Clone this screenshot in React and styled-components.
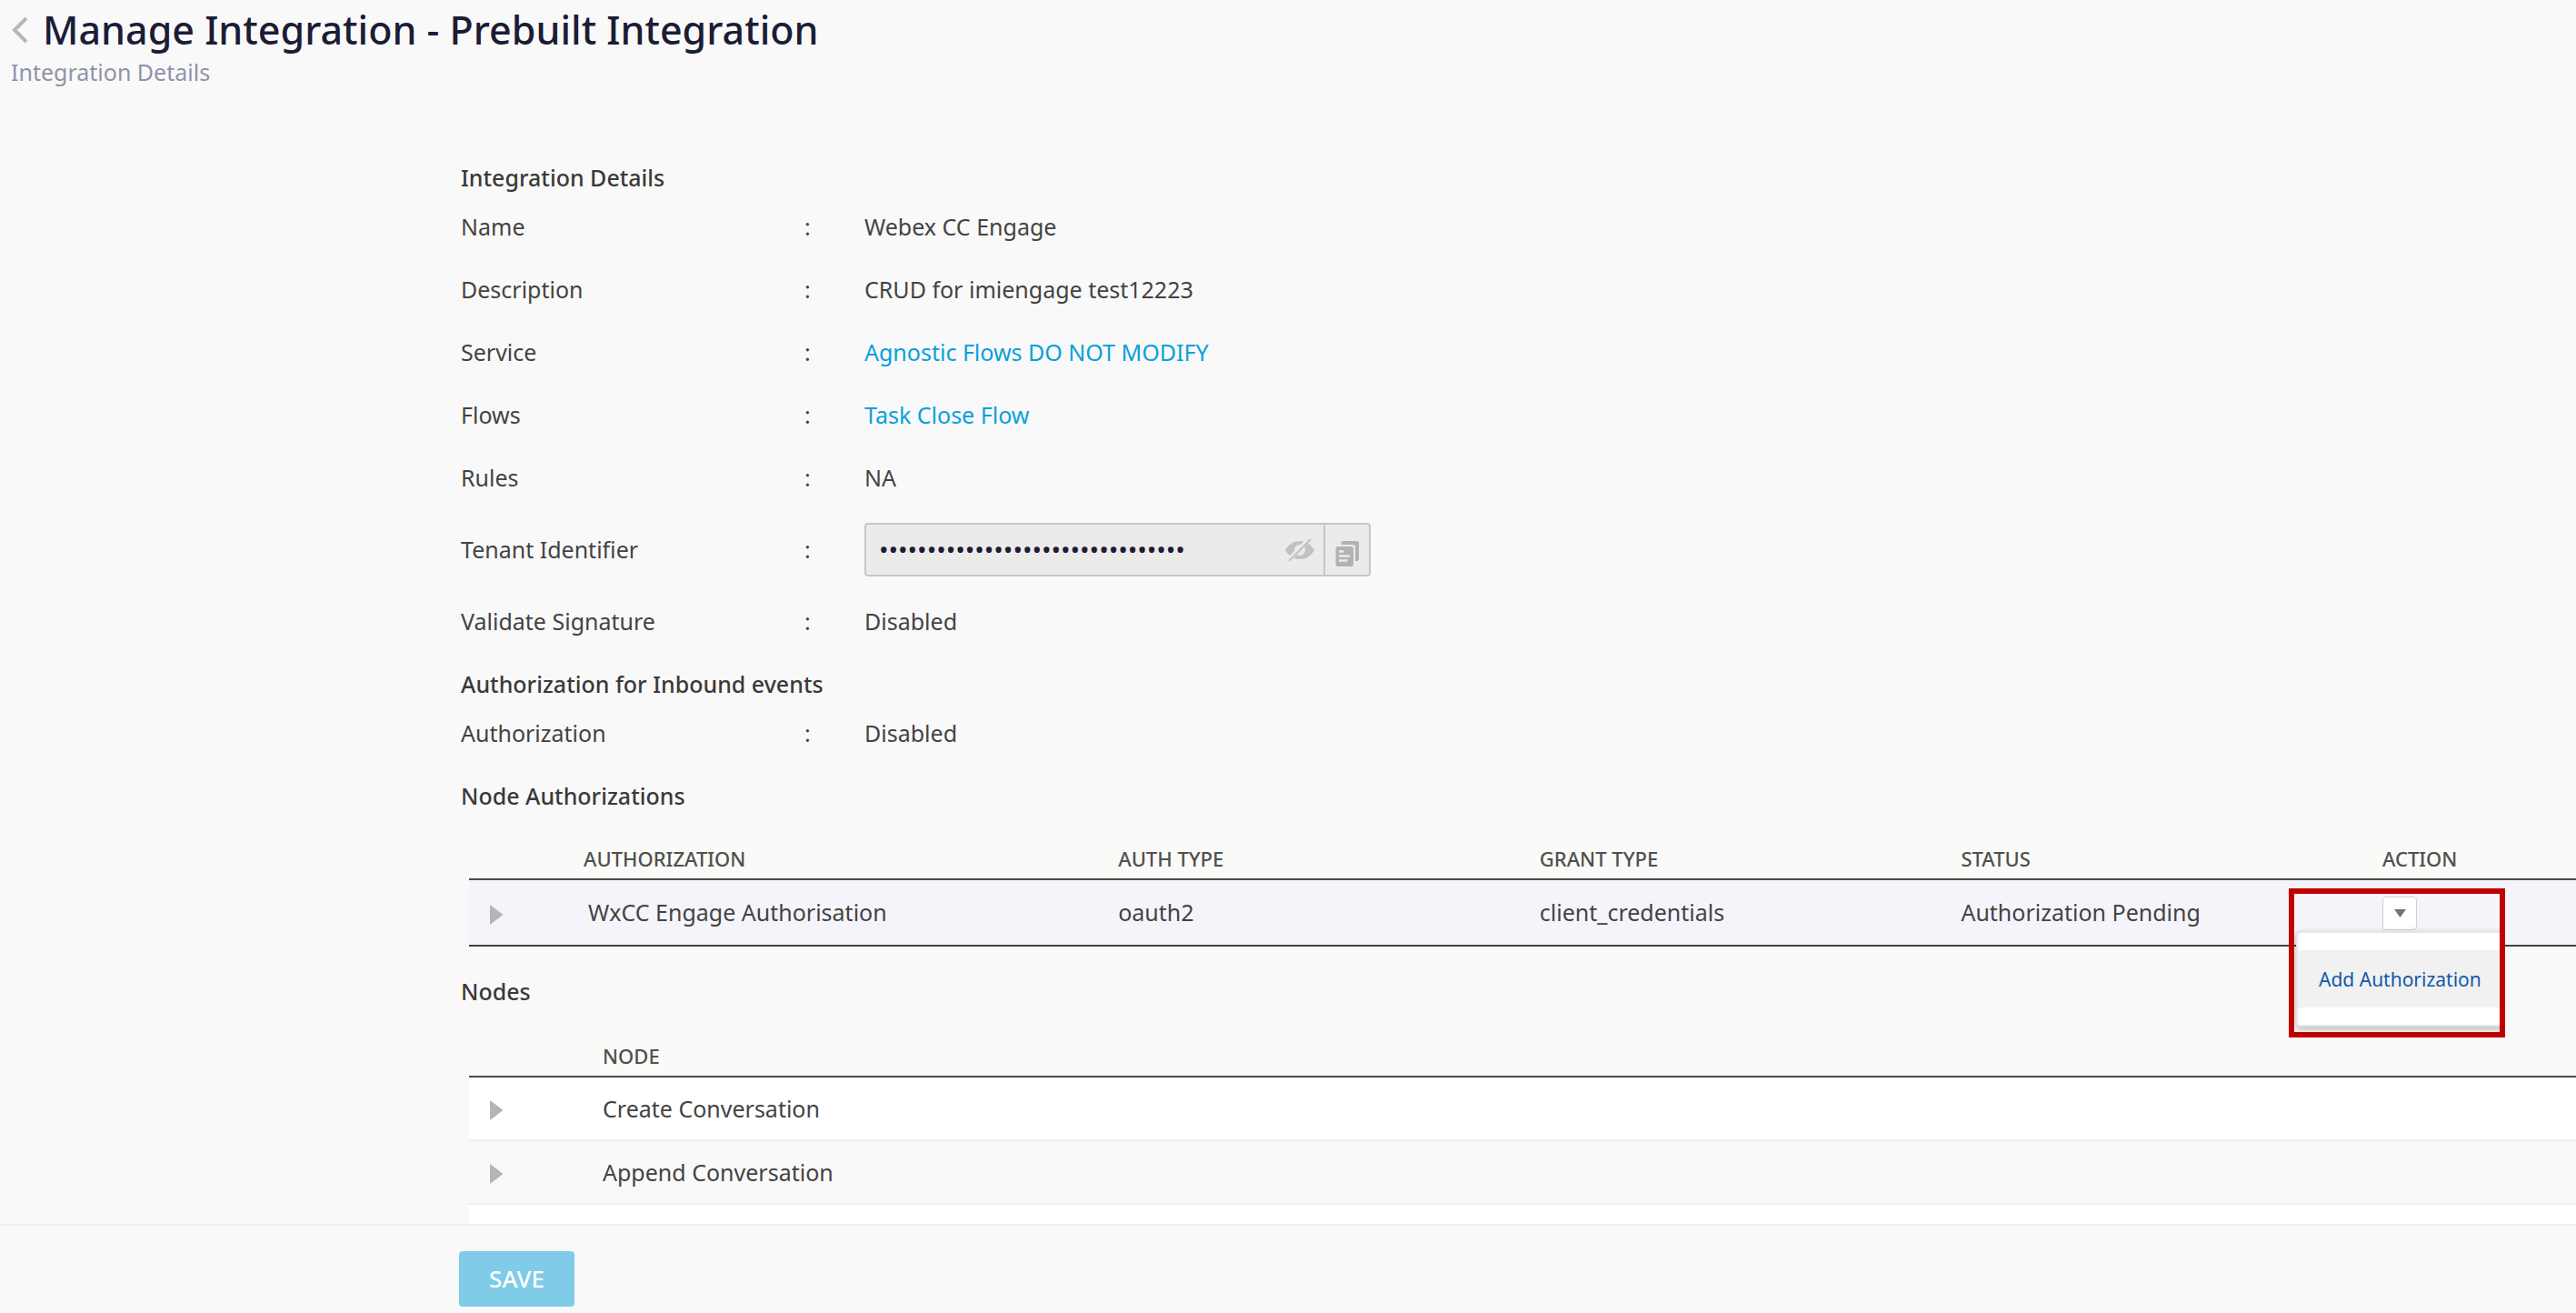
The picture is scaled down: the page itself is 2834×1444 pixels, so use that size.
import React, { useState } from "react";
import styled, { createGlobalStyle } from "styled-components";

const GlobalStyle = createGlobalStyle`
  *, *::before, *::after { box-sizing: border-box; }
  body {
    margin: 0;
    background: #f9f9f9;
    color: #434343;
    font: 400 25px/39px "Noto Sans", "Open Sans", sans-serif;
  }
  button, input { font: inherit; }
`;

const Page = styled.div`
  display: flex;
  flex-direction: column;
  height: 100vh;
`;

const Header = styled.header`
  padding: 5px 12px 0;
`;

const TitleRow = styled.div`
  display: flex;
  align-items: center;
  gap: 16px;
`;

const BackButton = styled.button`
  display: flex;
  padding: 0;
  border: 0;
  background: none;
  color: #b8b8b8;
`;

const Title = styled.h1`
  margin: 0;
  font-size: 43px;
  font-weight: 500;
  line-height: 56px;
  color: #1c1c36;
`;

const Subtitle = styled.p`
  margin: 0;
  line-height: 36px;
  color: #8f93aa;
`;

const Main = styled.main`
  flex: 1;
  min-height: 0;
  overflow: hidden;
  padding: 64px 0 0 507px;
`;

const SectionTitle = styled.h2`
  margin: 0;
  padding-top: 15px;
  font-size: 25px;
  font-weight: 500;
  line-height: 39px;
  color: #3a3a3a;
`;

const Details = styled.div`
  display: flex;
  flex-direction: column;
`;

const DetailRow = styled.div`
  display: grid;
  grid-template-columns: 378px 66px 1fr;
  align-items: center;
  padding: 15px 0;
`;

const Link = styled.a`
  color: #08a0dc;
  text-decoration: none;
`;

const SecretField = styled.div`
  display: flex;
  width: 557px;
  height: 59px;
  border: 2px solid #c6c6c6;
  border-radius: 4px;
  background: #ecebe9;
`;

const SecretInput = styled.input`
  flex: 1;
  min-width: 0;
  padding: 0 0 0 14px;
  border: 0;
  outline: 0;
  background: none;
  color: #1c1c36;
  font-size: 28px;
`;

const IconButton = styled.button`
  display: flex;
  align-items: center;
  justify-content: center;
  width: ${(p) => (p.$divided ? 50 : 53)}px;
  padding: ${(p) => (p.$divided ? "8px 0 0" : "0")};
  border: 0;
  border-left: ${(p) => (p.$divided ? "2px solid #c6c6c6" : "0")};
  background: none;
  color: ${(p) => (p.$divided ? "#b2b2b2" : "#c2c2c1")};
`;

const Table = styled.table`
  width: calc(100% - 9px);
  margin: 27px 0 0 9px;
  border-collapse: separate;
  border-spacing: 0;
  table-layout: fixed;
  text-align: left;
`;

const HeadCell = styled.th`
  width: ${(p) => p.$width || "auto"};
  height: 46px;
  padding: 0;
  border-bottom: 2px solid #4b4b49;
  background: #fafaf8;
  color: #50504e;
  font-size: 22px;
  font-weight: 500;
  line-height: 30px;
`;

const BodyRow = styled.tr`
  height: ${(p) => (p.$selected ? 73 : 70)}px;
  background: ${(p) => (p.$selected ? "#f5f4fb" : "#fff")};

  &:nth-child(even) { background: #f9f9f9; }

  td {
    padding: 0;
    border-bottom: 2px solid ${(p) => (p.$selected ? "#3f3f40" : "#eee")};
  }
`;

const AuthName = styled.span`
  padding-left: 5px;
`;

const ExpandButton = styled.button`
  display: flex;
  margin-left: 23px;
  padding: 4px 0 0;
  border: 0;
  background: none;
  color: #b5b5b5;
`;

const NodesHeading = styled.div`
  padding: 15px 0 2px;
`;

const ActionCell = styled.div`
  position: relative;
  display: flex;
  padding-top: 2px;
`;

const MenuToggle = styled.button`
  display: flex;
  align-items: center;
  justify-content: center;
  width: 38px;
  height: 37px;
  padding: 0;
  border: 1px solid #d0d0d0;
  border-radius: 4px;
  background: #fff;
  color: #757575;
`;

const Highlight = styled.div`
  position: absolute;
  top: -7px;
  left: -103px;
  width: 238px;
  height: 164px;
  padding: 41px 0 0 2px;
  border: 6px solid #c00000;
  overflow: hidden;
`;

const Menu = styled.div`
  width: 240px;
  padding: 19px 0;
  border: 2px solid #e5e5e5;
  border-radius: 4px;
  background: #fff;
  box-shadow: 0 3px 8px rgba(0, 0, 0, 0.25);
`;

const MenuItem = styled.button`
  display: block;
  width: 100%;
  height: 63px;
  padding: 0 23px;
  border: 0;
  background: #f1f1f1;
  color: #1259ab;
  font-size: 21px;
  line-height: 30px;
  text-align: left;
  white-space: nowrap;
`;

const Footer = styled.footer`
  padding: 28px 0 7px 505px;
  border-top: 2px solid #f0f0f0;
`;

const SaveButton = styled.button`
  display: block;
  width: 127px;
  height: 61px;
  padding: 0;
  border: 0;
  border-radius: 4px;
  background: #80cbe8;
  color: #fff;
  font-size: 26px;
  font-weight: 500;
`;

const DETAILS = [
  { label: "Name", value: "Webex CC Engage" },
  { label: "Description", value: "CRUD for imiengage test12223" },
  { label: "Service", value: "Agnostic Flows DO NOT MODIFY", link: true },
  { label: "Flows", value: "Task Close Flow", link: true },
  { label: "Rules", value: "NA" },
];

const NODES = ["Create Conversation", "Append Conversation"];

function BackIcon() {
  return (
    <svg width="19" height="30" viewBox="0 0 19 30" fill="none" stroke="currentColor" strokeWidth="4">
      <path d="M17 2 4 15l13 13" />
    </svg>
  );
}

function EyeOffIcon() {
  return (
    <svg width="34" height="26" viewBox="0 0 34 26" fill="currentColor">
      <path fillRule="evenodd" d="M1 13C5 6 10.500 3 17 3s12 3 16 10c-4 7-9.500 10-16 10S5 20 1 13Zm16-6a6 6 0 1 0 0 12 6 6 0 0 0 0-12Z" />
      <path d="M4.500 24 27.500 1" stroke="#ecebe9" strokeWidth="5" />
      <path d="M5 25 29 1" stroke="currentColor" strokeWidth="2" />
    </svg>
  );
}

function CopyIcon() {
  return (
    <svg width="26" height="28" viewBox="0 0 26 28" fill="none">
      <path d="M6.500 4V2.500a2.500 2.500 0 0 1 2.500-2.500h14.500A2.500 2.500 0 0 1 26 2.500v17.500a2 2 0 0 1-2 2H22V6a2 2 0 0 0-2-2Z" fill="currentColor" />
      <rect x="0.500" y="6" width="19.500" height="22" rx="2.500" fill="currentColor" />
      <path d="M4 11.500h5.500M4 16.500h12M4 21.500h9.500" stroke="#ecebe9" strokeWidth="2.500" />
    </svg>
  );
}

function ArrowRightIcon() {
  return (
    <svg width="15" height="22" viewBox="0 0 15 22" fill="currentColor">
      <path d="M0 0 14.500 11 0 22Z" />
    </svg>
  );
}

function ArrowDownIcon() {
  return (
    <svg width="13" height="9" viewBox="0 0 13 9" fill="currentColor">
      <path d="M0 0h13L6.500 9Z" />
    </svg>
  );
}

function Detail({ label, htmlFor, children }) {
  return (
    <DetailRow>
      {htmlFor ? <label htmlFor={htmlFor}>{label}</label> : <span>{label}</span>}
      <span>:</span>
      <div>{children}</div>
    </DetailRow>
  );
}

function Expander({ label }) {
  return (
    <ExpandButton type="button" aria-label={`Expand ${label}`}>
      <ArrowRightIcon />
    </ExpandButton>
  );
}

export default function App() {
  const [menuOpen, setMenuOpen] = useState(true);
  const [secretShown, setSecretShown] = useState(false);

  return (
    <Page>
      <GlobalStyle />
      <Header>
        <TitleRow>
          <BackButton type="button" aria-label="Back">
            <BackIcon />
          </BackButton>
          <Title>Manage Integration - Prebuilt Integration</Title>
        </TitleRow>
        <Subtitle>Integration Details</Subtitle>
      </Header>

      <Main>
        <SectionTitle>Integration Details</SectionTitle>
        <Details>
          {DETAILS.map((d) => (
            <Detail key={d.label} label={d.label}>
              {d.link ? <Link href="#">{d.value}</Link> : d.value}
            </Detail>
          ))}
          <Detail label="Tenant Identifier" htmlFor="tenant">
            <SecretField>
              <SecretInput
                id="tenant"
                type={secretShown ? "text" : "password"}
                readOnly
                value="00000000000000000000000000000000"
              />
              <IconButton type="button" aria-label="Show value" onClick={() => setSecretShown(!secretShown)}>
                <EyeOffIcon />
              </IconButton>
              <IconButton type="button" aria-label="Copy value" $divided>
                <CopyIcon />
              </IconButton>
            </SecretField>
          </Detail>
          <Detail label="Validate Signature">Disabled</Detail>
        </Details>

        <SectionTitle>Authorization for Inbound events</SectionTitle>
        <Detail label="Authorization">Disabled</Detail>

        <SectionTitle>Node Authorizations</SectionTitle>
        <Table>
          <thead>
            <tr>
              <HeadCell $width="126px" aria-label="Expand" />
              <HeadCell>AUTHORIZATION</HeadCell>
              <HeadCell $width="20%">AUTH TYPE</HeadCell>
              <HeadCell $width="20%">GRANT TYPE</HeadCell>
              <HeadCell $width="20%">STATUS</HeadCell>
              <HeadCell $width="213px">ACTION</HeadCell>
            </tr>
          </thead>
          <tbody>
            <BodyRow $selected>
              <td>
                <Expander label="WxCC Engage Authorisation" />
              </td>
              <td>
                <AuthName>WxCC Engage Authorisation</AuthName>
              </td>
              <td>oauth2</td>
              <td>client_credentials</td>
              <td>Authorization Pending</td>
              <td>
                <ActionCell>
                  <MenuToggle
                    type="button"
                    aria-label="Actions"
                    aria-expanded={menuOpen}
                    onClick={() => setMenuOpen(!menuOpen)}
                  >
                    <ArrowDownIcon />
                  </MenuToggle>
                  {menuOpen && (
                    <Highlight>
                      <Menu role="menu">
                        <MenuItem type="button" role="menuitem">Add Authorization</MenuItem>
                      </Menu>
                    </Highlight>
                  )}
                </ActionCell>
              </td>
            </BodyRow>
          </tbody>
        </Table>

        <NodesHeading>
          <SectionTitle>Nodes</SectionTitle>
        </NodesHeading>
        <Table>
          <thead>
            <tr>
              <HeadCell $width="147px" aria-label="Expand" />
              <HeadCell>NODE</HeadCell>
            </tr>
          </thead>
          <tbody>
            {NODES.map((name) => (
              <BodyRow key={name}>
                <td>
                  <Expander label={name} />
                </td>
                <td>{name}</td>
              </BodyRow>
            ))}
            <BodyRow>
              <td />
              <td />
            </BodyRow>
          </tbody>
        </Table>
      </Main>

      <Footer>
        <SaveButton type="button">SAVE</SaveButton>
      </Footer>
    </Page>
  );
}
